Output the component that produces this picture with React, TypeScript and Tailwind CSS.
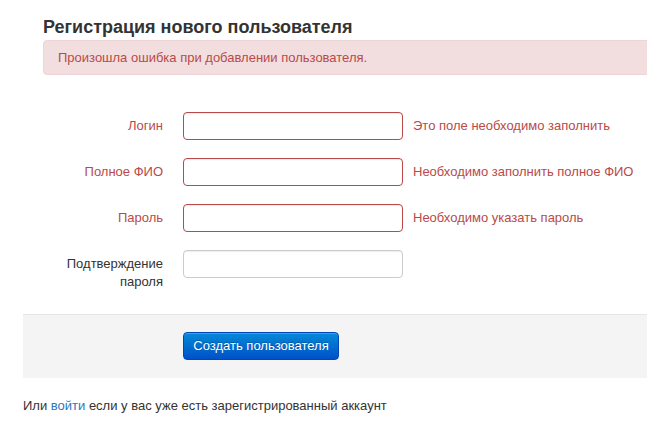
import React from 'react';

type Field = {
  label: string[];
  error?: string;
  type?: string;
};

const fields: Field[] = [
  { label: ['Логин'], error: 'Это поле необходимо заполнить' },
  { label: ['Полное ФИО'], error: 'Необходимо заполнить полное ФИО' },
  { label: ['Пароль'], error: 'Необходимо указать пароль', type: 'password' },
  { label: ['Подтверждение', 'пароля'], type: 'password' },
];

function ControlGroup({ field }: { field: Field }) {
  const hasError = !!field.error;
  return (
    <div className="flex items-start gap-5">
      <label
        className={`w-[140px] shrink-0 text-right pt-[5px] leading-[18px] ${hasError ? 'text-[#b94a48]' : 'text-[#333]'}`}
      >
        {field.label.map((line) => (
          <div key={line}>{line}</div>
        ))}
      </label>
      <div className="flex items-center">
        <input
          type={field.type || 'text'}
          className={`w-[220px] h-[28px] rounded-[4px] border bg-white px-[6px] outline-none shadow-[inset_0_1px_1px_rgba(0,0,0,0.075)] ${hasError ? 'border-[#b94a48]' : 'border-[#cccccc]'}`}
        />
        {hasError && <span className="ml-[10px] text-[#b94a48] leading-[28px] whitespace-nowrap">{field.error}</span>}
      </div>
    </div>
  );
}

export default function App() {
  return (
    <div className="min-h-screen w-[647px] overflow-hidden bg-white font-['Liberation_Sans',Arial,sans-serif] text-[13px] text-[#333] pl-[23px]">
      <div className="pl-5">
        <h3 className="pt-[17px] text-[18px] font-bold leading-[20px] text-[#333]">Регистрация нового пользователя</h3>
        <div className="mt-[3px] flex h-[35px] w-[640px] items-center rounded-[4px] border border-[#eed3d7] bg-[#f2dede] px-[14px] text-[#b94a48]">
          Произошла ошибка при добавлении пользователя.
        </div>
      </div>

      <form className="mt-[37px]" onSubmit={(e) => e.preventDefault()}>
        <div className="flex flex-col gap-[18px]">
          {fields.map((f) => (
            <ControlGroup key={f.label.join(' ')} field={f} />
          ))}
        </div>

        <div className="mt-[23px] h-[64px] w-[640px] border-t border-[#e5e5e5] bg-[#f4f4f4] pl-[160px] pt-[17px]">
          <button
            type="submit"
            className="h-[28px] w-[156px] rounded-[4px] border border-[#0048b8] bg-gradient-to-b from-[#0a8ad8] to-[#0050c8] text-[13px] text-white [text-shadow:0_-1px_0_rgba(0,0,0,0.25)] shadow-[inset_0_1px_0_rgba(255,255,255,0.2)]"
          >
            Создать пользователя
          </button>
        </div>
      </form>

      <p className="mt-[19px] leading-[18px]">
        Или <a href="#" className="text-[#2a78c0]">войти</a> если у вас уже есть зарегистрированный аккаунт
      </p>
    </div>
  );
}
